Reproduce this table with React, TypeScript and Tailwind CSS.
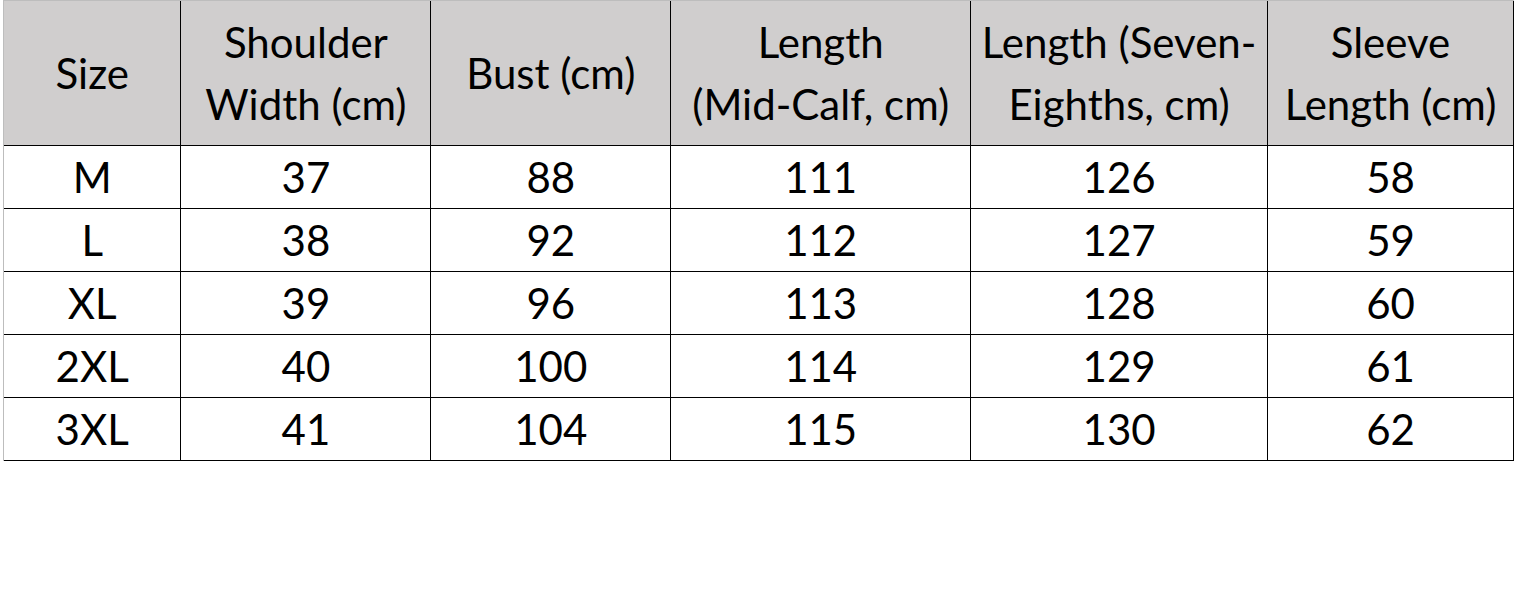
const headers: React.ReactNode[] = [
  'Size',
  <>Shoulder<br />Width (cm)</>,
  'Bust (cm)',
  <>Length<br />(Mid-Calf, cm)</>,
  <>Length (Seven-<br />Eighths, cm)</>,
  <>Sleeve<br />Length (cm)</>,
];

const rows = [
  ['M', '37', '88', '111', '126', '58'],
  ['L', '38', '92', '112', '127', '59'],
  ['XL', '39', '96', '113', '128', '60'],
  ['2XL', '40', '100', '114', '129', '61'],
  ['3XL', '41', '104', '115', '130', '62'],
];

const widths = ['w-[177px]', 'w-[250px]', 'w-[240px]', 'w-[300px]', 'w-[297px]', 'w-[246px]'];

export default function App() {
  return (
    <div className="min-h-[589px] w-[1515px] bg-white text-black" style={{ fontFamily: 'Lato, "Open Sans", sans-serif' }}>
      <div className="ml-[3px] w-[1511px] border-t border-l border-[#bdbdbd]">
        <table className="table-fixed border-collapse text-[42px] leading-[62px]">
          <thead>
            <tr className="h-[144px] bg-[#d0cece]">
              {headers.map((h, i) => (
                <th
                  key={i}
                  className={`${widths[i]} p-0 text-center align-middle font-normal border-b border-black ${i > 0 ? 'border-l' : ''} ${i === 5 ? 'border-r' : ''}`}
                >
                  {h}
                </th>
              ))}
            </tr>
          </thead>
          <tbody>
            {rows.map((r, ri) => (
              <tr key={ri} className="h-[63px]">
                {r.map((c, ci) => (
                  <td
                    key={ci}
                    className={`p-0 text-center align-middle border-b border-black ${ci > 0 ? 'border-l' : ''} ${ci === 5 ? 'border-r' : ''}`}
                  >
                    {c}
                  </td>
                ))}
              </tr>
            ))}
          </tbody>
        </table>
      </div>
    </div>
  );
}
